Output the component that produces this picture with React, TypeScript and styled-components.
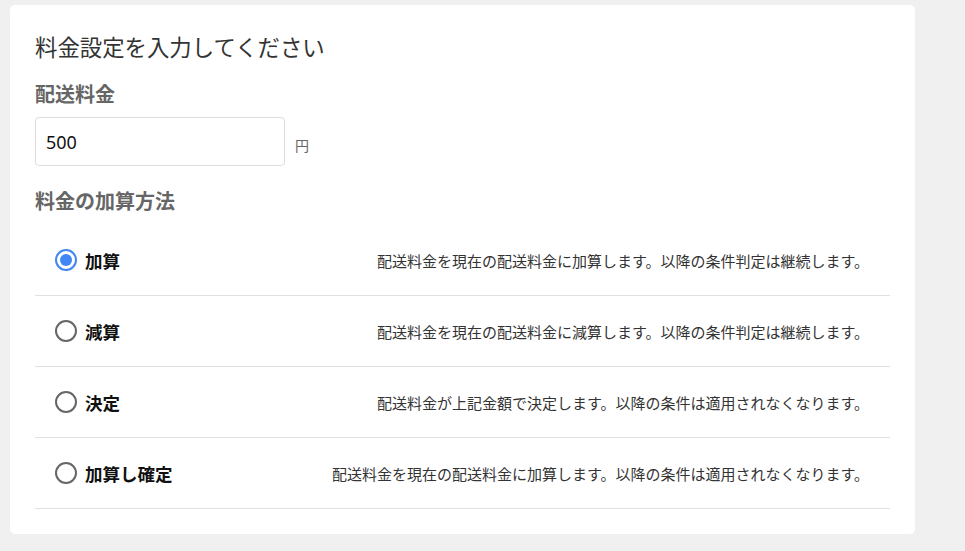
import React, { useState } from 'react';
import styled, { createGlobalStyle } from 'styled-components';

const GlobalStyle = createGlobalStyle`
  html, body {
    margin: 0;
    padding: 0;
    background: #f0f0f0;
  }
  body {
    font-family: "Noto Sans", "Noto Sans CJK JP", sans-serif;
    color: #333;
  }
`;

const Page = styled.div`
  padding: 5px 50px 18px 10px;
`;

const Card = styled.section`
  width: 905px;
  box-sizing: border-box;
  background: #fff;
  border-radius: 5px;
  padding: 25px 25px 25px;
`;

const Title = styled.h2`
  margin: 0;
  font-family: "Noto Sans CJK JP", sans-serif;
  font-size: 22.4px;
  font-weight: 400;
  line-height: 32px;
  color: #333;
`;

const FieldLabel = styled.h3<{ $top: number }>`
  margin: ${p => p.$top}px 0 0;
  font-family: "Noto Sans CJK JP", sans-serif;
  font-size: 20px;
  font-weight: 700;
  line-height: 30px;
  color: #666;
`;

const InputRow = styled.div`
  display: flex;
  align-items: center;
  gap: 10px;
  margin-top: 8px;
`;

const PriceInput = styled.input`
  width: 250px;
  height: 49px;
  box-sizing: border-box;
  border: 1px solid #ddd;
  border-radius: 4px;
  padding: 0 10px;
  font-family: "Noto Sans", sans-serif;
  font-size: 18px;
  color: #111;
  outline: none;
`;

const Unit = styled.span`
  font-family: "Noto Sans CJK JP", sans-serif;
  font-size: 14px;
  color: #666;
  padding-top: 6px;
`;

const OptionList = styled.div`
  margin-top: 9px;
`;

const OptionRow = styled.label`
  display: flex;
  align-items: center;
  height: 70px;
  padding: 0 21px 0 20px;
  border-bottom: 1px solid #e0e0e0;
  cursor: pointer;
`;

const Radio = styled.span<{ $checked: boolean }>`
  width: 22px;
  height: 22px;
  box-sizing: border-box;
  border-radius: 50%;
  border: 2px solid ${p => (p.$checked ? '#4285f4' : '#666')};
  display: flex;
  align-items: center;
  justify-content: center;
  flex-shrink: 0;

  &::after {
    content: '';
    width: 12px;
    height: 12px;
    border-radius: 50%;
    background: #4285f4;
    display: ${p => (p.$checked ? 'block' : 'none')};
  }
`;

const OptionName = styled.span`
  margin-left: 8px;
  font-family: "Noto Sans CJK JP", sans-serif;
  font-size: 17.5px;
  font-weight: 700;
  color: #111;
`;

const OptionDesc = styled.span`
  margin-left: auto;
  font-family: "Noto Sans CJK JP", sans-serif;
  font-size: 15px;
  color: #333;
  white-space: nowrap;
`;

const OPTIONS = [
  { id: 'add', name: '加算', desc: '配送料金を現在の配送料金に加算します。以降の条件判定は継続します。' },
  { id: 'sub', name: '減算', desc: '配送料金を現在の配送料金に減算します。以降の条件判定は継続します。' },
  { id: 'fix', name: '決定', desc: '配送料金が上記金額で決定します。以降の条件は適用されなくなります。' },
  { id: 'addfix', name: '加算し確定', desc: '配送料金を現在の配送料金に加算します。以降の条件は適用されなくなります。' },
];

export default function App() {
  const [price, setPrice] = useState('500');
  const [method, setMethod] = useState('add');

  return (
    <>
      <GlobalStyle />
      <Page>
        <Card>
          <Title>料金設定を入力してください</Title>

          <FieldLabel $top={17}>配送料金</FieldLabel>
          <InputRow>
            <PriceInput value={price} onChange={e => setPrice(e.target.value)} />
            <Unit>円</Unit>
          </InputRow>

          <FieldLabel $top={20}>料金の加算方法</FieldLabel>
          <OptionList>
            {OPTIONS.map(o => (
              <OptionRow key={o.id} onClick={() => setMethod(o.id)}>
                <Radio $checked={method === o.id} />
                <OptionName>{o.name}</OptionName>
                <OptionDesc>{o.desc}</OptionDesc>
              </OptionRow>
            ))}
          </OptionList>
        </Card>
      </Page>
    </>
  );
}
